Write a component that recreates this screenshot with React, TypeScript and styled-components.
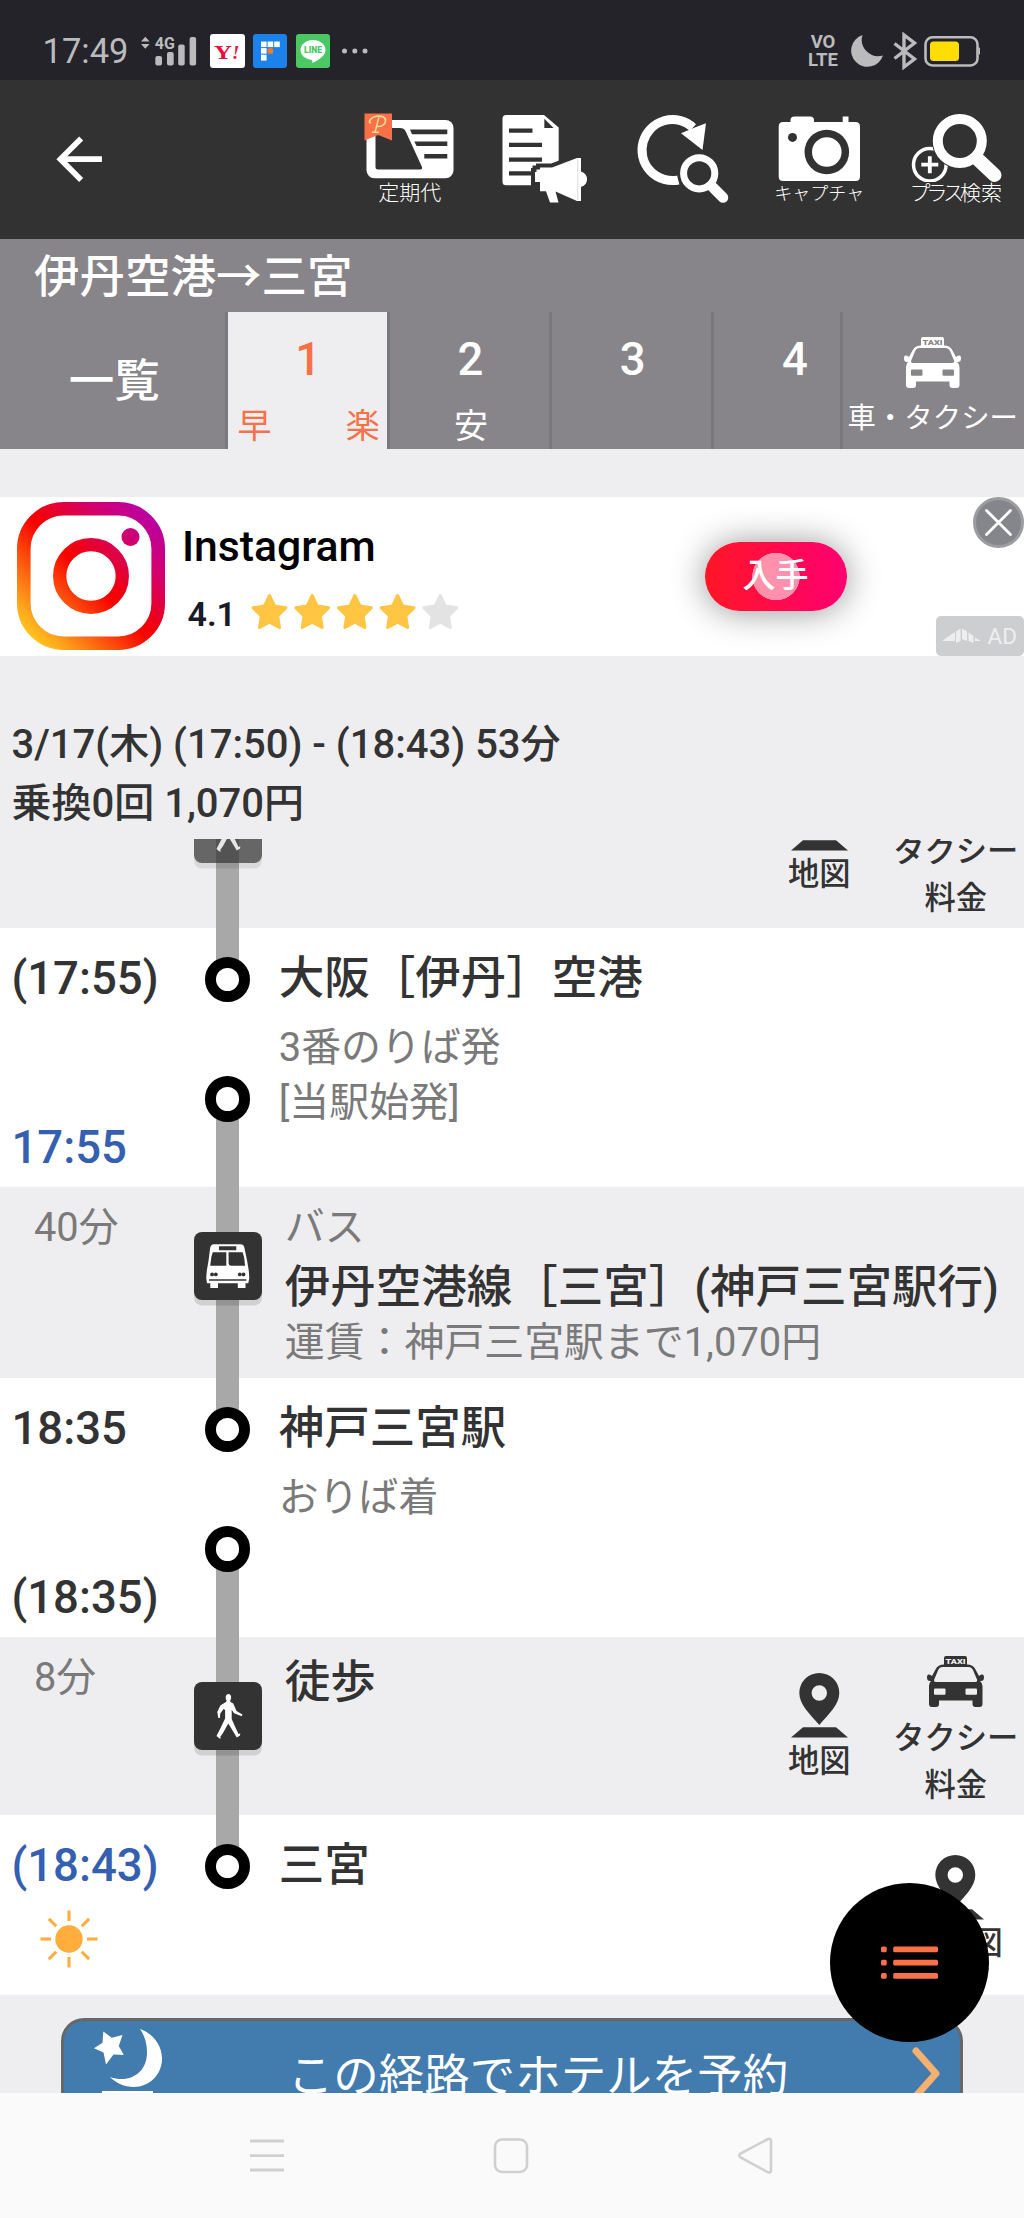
import React from "react";
import styled, { createGlobalStyle, css } from "styled-components";

const color = {
  page: "#eeeef0",
  ink: "#333333",
  sub: "#7a7a7a",
  blue: "#355fb0",
  accent: "#fa7047",
  bar: "#323232",
  header: "#878589",
  divider: "#79787d",
  rail: "#a8a8a8",
};

const Global = createGlobalStyle`
  * { box-sizing: border-box; }
  body { margin: 0; background: ${color.page}; }
  svg { display: block; flex: none; }
`;

const Screen = styled.div`
  width: 1024px;
  height: 2218px;
  position: relative;
  overflow: hidden;
  display: flex;
  flex-direction: column;
  background: ${color.page};
  color: ${color.ink};
  font-family: Roboto, "Noto Sans CJK JP", sans-serif;
  white-space: nowrap;
`;

/* ---------- status bar ---------- */

const StatusBar = styled.header`
  height: 80px;
  flex: none;
  display: flex;
  align-items: center;
  padding: 22px 44px 0 42.5px;
  background: #232329;
  color: #bbbbbd;
`;

const Clock = styled.span`
  width: 98.5px;
  font-size: 34.5px;
  line-height: 40px;
`;

const AppBadge = styled.span<{ $bg: string }>`
  width: 34.5px;
  height: 34.5px;
  margin-right: 8.3px;
  border-radius: 3px;
  background: ${(p) => p.$bg};
  overflow: hidden;
`;

const StatusRight = styled.div`
  margin-left: auto;
  display: flex;
  align-items: center;
`;

const Volte = styled.span`
  width: 32px;
  margin-right: 9px;
  display: flex;
  flex-direction: column;
  align-items: center;
  font-size: 18.5px;
  font-weight: 700;
  line-height: 18px;
`;

/* ---------- toolbar ---------- */

const Toolbar = styled.nav`
  height: 159px;
  flex: none;
  display: flex;
  background: ${color.bar};
  color: #fff;
`;

const BackButton = styled.div`
  padding: 45px 0 0 45px;
  margin-right: auto;
`;

const ToolItem = styled.div`
  width: 136.5px;
  padding-top: 33px;
  display: flex;
  flex-direction: column;
  align-items: center;
`;

const ToolLabel = styled.span<{ $size: number }>`
  font-size: ${(p) => p.$size}px;
  font-weight: 300;
  line-height: 23px;
`;

const Tight = styled.span`
  letter-spacing: -4px;
`;

/* ---------- route header ---------- */

const RouteTitle = styled.h1`
  height: 72.5px;
  flex: none;
  margin: 0;
  padding: 5px 0 0 34px;
  background: ${color.header};
  color: #fff;
  font-size: 45.5px;
  font-weight: 500;
  line-height: 67px;
`;

const Tabs = styled.div`
  height: 137px;
  flex: none;
  display: flex;
  background: ${color.header};
  color: #fff;
`;

const ListTab = styled.div`
  width: 227.5px;
  flex: none;
  border-right: 3px solid ${color.divider};
  text-align: center;
  font-size: 45.5px;
  font-weight: 500;
  line-height: 139px;
  padding-left: 4px;
`;

const TabScroller = styled.div`
  width: 612px;
  flex: none;
  display: flex;
  overflow: hidden;
`;

const Tab = styled.div<{ $active?: boolean }>`
  width: 162.3px;
  flex: none;
  padding: 20px 0 0;
  border-right: 3px solid ${color.divider};
  ${(p) =>
    p.$active &&
    css`
      background: ${color.page};
      color: ${color.accent};
    `}
`;

const TabNumber = styled.div`
  font-size: 45.5px;
  font-weight: 500;
  line-height: 55px;
  text-align: center;
  padding-left: 2px;
`;

const TabMarks = styled.div`
  margin-right: -3px;
  padding-top: 18px;
  display: grid;
  grid-template-columns: repeat(3, 1fr);
  text-align: center;
  font-size: 34px;
  line-height: 42px;
`;

const TaxiTab = styled.div`
  flex: 1;
  border-left: 3px solid ${color.divider};
  padding: 25px 1px 0 0;
  display: flex;
  flex-direction: column;
  align-items: center;
`;

const TaxiTabLabel = styled.span`
  margin-top: 12.5px;
  font-size: 28.4px;
  line-height: 38px;
`;

/* ---------- advertisement ---------- */

const Ad = styled.section`
  position: relative;
  height: 159px;
  flex: none;
  margin-top: 48.5px;
  padding: 5px 0 0 17px;
  display: flex;
  background: #fff;
`;

const AdInfo = styled.div`
  width: 539.5px;
  padding: 22px 0 0 17px;
`;

const AdName = styled.div`
  font-size: 42.7px;
  font-weight: 500;
  line-height: 44px;
  color: #000;
`;

const Rating = styled.div`
  display: flex;
  align-items: center;
  margin-top: 24.5px;
  padding-left: 5.5px;
  height: 39px;
  font-size: 34px;
  font-weight: 600;
  color: #191b29;
`;

const Score = styled.span`
  width: 63px;
  line-height: 39px;
  padding-top: 4px;
`;

const GetButton = styled.div`
  width: 142px;
  height: 69px;
  margin-top: 40px;
  border-radius: 35px;
  background: radial-gradient(circle at 71px 34.5px, rgba(255, 255, 255, 0.55) 23.5px, transparent 24px),
    linear-gradient(90deg, #ff1626, #ff0071);
  box-shadow: 0 1px 34px rgba(0, 0, 0, 0.42);
  color: #fff;
  font-size: 33px;
  font-weight: 500;
  line-height: 67px;
  text-align: center;
`;

const CloseBadge = styled.div`
  position: absolute;
  right: 0;
  top: 0;
  width: 51px;
  height: 51px;
  border-radius: 50%;
  border: 3px solid #9c9da1;
  background: #85868c;
`;

const AdBadge = styled.div`
  position: absolute;
  right: 0;
  bottom: 0;
  width: 88px;
  height: 40px;
  padding: 0 7px 0 6px;
  border-radius: 5px;
  background: #cdced0;
  color: #eeeeef;
  display: flex;
  align-items: center;
  justify-content: space-between;
  font-size: 22.5px;
`;

/* ---------- summary ---------- */

const Summary = styled.section`
  height: 183px;
  flex: none;
  padding: 59px 0 0 11.5px;
  font-size: 40px;
  font-weight: 500;
  line-height: 59px;
`;

/* ---------- route list ---------- */

const RouteList = styled.main`
  height: 1254px;
  flex: none;
  overflow: hidden;
`;

const Row = styled.div<{ $h: number; $leg?: boolean; $scrolled?: number }>`
  height: ${(p) => p.$h}px;
  margin-top: ${(p) => -(p.$scrolled ?? 0)}px;
  display: grid;
  grid-template-columns: 193.5px 68.3px 1fr auto;
  background: ${(p) => (p.$leg ? color.page : "#fff")};
`;

const Times = styled.div`
  padding: 21px 0 9px 11.5px;
  display: flex;
  flex-direction: column;
  justify-content: space-between;
`;

const Time = styled.div<{ $blue?: boolean }>`
  font-size: 45.5px;
  font-weight: 500;
  line-height: 60px;
  color: ${(p) => (p.$blue ? color.blue : color.ink)};
`;

const Duration = styled.div`
  padding: 14px 0 0 34px;
  font-size: 39.8px;
  line-height: 54px;
  color: ${color.sub};
`;

const StationRail = styled.div`
  display: flex;
  flex-direction: column;
  align-items: center;
`;

const Segment = styled.div<{ $h?: number }>`
  width: 23px;
  height: ${(p) => p.$h ?? 0}px;
  flex: ${(p) => (p.$h ? "none" : "1")};
  background: ${color.rail};
  margin: ${(p) => (p.$h ? "0 0 -6px" : "-6px 0 0")};
`;

const Node = styled.div<{ $gap?: number }>`
  position: relative;
  flex: none;
  width: 45.5px;
  height: 45.5px;
  margin-top: ${(p) => p.$gap ?? 0}px;
  border: 11.3px solid #000;
  border-radius: 50%;
  background: #fff;
`;

const LegRail = styled.div`
  padding-top: 45px;
  background: linear-gradient(${color.rail}, ${color.rail}) center / 23px 100% no-repeat;
`;

const ModeBox = styled.div<{ $faded?: boolean }>`
  width: 68.3px;
  height: 68.3px;
  border-radius: 8px;
  background: ${color.ink};
  box-shadow: 0 5.5px 0 rgba(0, 0, 0, 0.12);
  opacity: ${(p) => (p.$faded ? 0.72 : 1)};
`;

const StationBody = styled.div`
  padding: 10px 0 0 17px;
`;

const StationName = styled.div`
  font-size: 45.5px;
  font-weight: 500;
  line-height: 82px;
`;

const Note = styled.div`
  font-size: 39.9px;
  line-height: 55px;
  color: ${color.sub};
`;

const LegBody = styled.div`
  padding: 13px 0 0 23px;
`;

const LineName = styled.div`
  padding-top: 5.5px;
  font-size: 45.5px;
  font-weight: 500;
  line-height: 54.5px;
`;

const Actions = styled.div`
  display: flex;
`;

const Action = styled.div<{ $top: number }>`
  width: 136.5px;
  padding-top: ${(p) => p.$top}px;
  display: flex;
  flex-direction: column;
  align-items: center;
  text-align: center;
  font-size: 31.3px;
  font-weight: 500;
  line-height: 47px;
`;

const ActionText = styled.div<{ $gap: number }>`
  margin-top: ${(p) => p.$gap}px;
`;

const WeatherRow = styled.div`
  padding-left: 28px;
  margin-bottom: 18px;
`;

const HotelButton = styled.div`
  height: 130px;
  margin: 23px 61px 0;
  padding: 8px 18px 0 30px;
  border: 3px solid #676767;
  border-radius: 23px;
  background: #427bad;
  color: #fff;
  display: flex;
  justify-content: space-between;
  font-size: 45.5px;
  line-height: 95px;
`;

const HotelText = styled.span`
  margin-left: 2px;
`;

const ChevronSlot = styled.div`
  padding-top: 17px;
`;

const Fab = styled.div`
  position: absolute;
  left: 830px;
  top: 1882.5px;
  width: 159px;
  height: 159px;
  border-radius: 50%;
  background: #000;
  display: flex;
  align-items: center;
  justify-content: center;
`;

const SystemNav = styled.footer`
  flex: 1;
  position: relative;
  display: flex;
  justify-content: space-between;
  align-items: center;
  padding: 0 251px 0 249px;
  background: #fafafa;
`;

/* ---------- icons ---------- */

const SignalIcon = () => (
  <svg width="69" height="36" viewBox="141 33 69 36" fill="#bbbbbd">
    <path d="M141 41.5l4.3-4.8 4.3 4.8zM141 44h8.6l-4.3 4.8z" />
    <text x="154.8" y="49" fontSize="16" fontWeight="700" fontFamily="Roboto">4G</text>
    <rect x="155.3" y="56" width="6.7" height="9.5" rx="2" />
    <rect x="167" y="52" width="6.7" height="13.5" rx="2" />
    <rect x="178.2" y="44.5" width="6.5" height="21" rx="2" />
    <rect x="189.6" y="37" width="6.5" height="28.5" rx="2" />
  </svg>
);

const YahooBadge = () => (
  <AppBadge $bg="#fff">
    <svg width="34.5" height="34.5" viewBox="0 0 34.5 34.5">
      <text x="4" y="25" fontSize="19" fontWeight="700" fontFamily="Liberation Serif" fill="#f5073c" textLength="18" lengthAdjust="spacingAndGlyphs">Y</text>
      <text x="22" y="25" fontSize="19" fontWeight="700" fontStyle="italic" fontFamily="Liberation Serif" fill="#f5073c">!</text>
    </svg>
  </AppBadge>
);

const BoardBadge = () => (
  <AppBadge $bg="#1a82e8">
    <svg width="34.5" height="34.5" viewBox="0 0 34.5 34.5" fill="#fff">
      <rect x="8" y="7.5" width="5.6" height="5.6" />
      <rect x="14.6" y="7.5" width="5.6" height="5.6" />
      <rect x="21.2" y="7.5" width="5.6" height="5.6" />
      <rect x="8" y="14.1" width="5.6" height="5.6" />
      <rect x="8" y="20.7" width="5.6" height="5.9" />
      <circle cx="17.4" cy="17" r="3" fill="#f47b28" />
    </svg>
  </AppBadge>
);

const LineBadge = () => (
  <AppBadge $bg="#4bc764">
    <svg width="34.5" height="34.5" viewBox="0 0 34.5 34.5">
      <path d="M17 6C10 6 4.5 10.5 4.5 16c0 5 4.3 8.8 10.5 9.7 1.500.3 1.500 1 1.300 3.300C22 26.500 29.500 22 29.500 16 29.500 10.500 24 6 17 6z" fill="#fff" />
      <text x="8" y="19" fontSize="8.6" fontWeight="900" fontFamily="Roboto" fill="#4bc764" textLength="18" lengthAdjust="spacingAndGlyphs">LINE</text>
    </svg>
  </AppBadge>
);

const MoreDots = () => (
  <svg width="30" height="8" viewBox="0 0 30 8" fill="#bbbbbd">
    <circle cx="6.5" cy="4" r="2.5" />
    <circle cx="16.8" cy="4" r="2.5" />
    <circle cx="27" cy="4" r="2.5" />
  </svg>
);

const StatusIcons = () => (
  <svg width="132" height="38" viewBox="848 32 132 38">
    <path d="M862.5 35a16.3 16.3 0 1 0 20.5 20.5A16.5 16.5 0 0 1 862.5 35z" fill="#bbbbbd" />
    <path d="M894.5 43.5l20 15.5-10.500 8V35l10.500 8-20 15.500" fill="none" stroke="#bbbbbd" strokeWidth="3.4" />
    <rect x="925.5" y="37.3" width="52" height="28.2" rx="7" fill="none" stroke="#bbbbbd" strokeWidth="2.6" />
    <path d="M978.5 47q3 1.500 3 4t-3 4z" fill="#bbbbbd" />
    <rect x="930" y="41.5" width="29" height="19.5" rx="3.5" fill="#ffdd00" />
  </svg>
);

const BackIcon = () => (
  <svg width="68.3" height="68.3" viewBox="0 0 24 24" fill="#fff">
    <path d="M20 11H7.83l5.590-5.590L12 4l-8 8 8 8 1.410-1.410L7.830 13H20v-2z" />
  </svg>
);

const PassIcon = () => (
  <svg width="96" height="69" viewBox="0 0 96 69">
    <rect x="4.500" y="7" width="87" height="58.3" rx="8" fill="#fff" />
    <path d="M13.500 18q0-3 3-3H38q4 0 5.500 3L60 54q.6 2.500-2 2.500H16q-2.500 0-2.500-2.500z" fill={color.bar} />
    <path d="M48 16.600h37.300v4.600H50zM52.300 28.400h33v4.600H54.600zM62.300 41h23v4.600h-23z" fill={color.bar} />
    <path d="M2.500.6H30v27l-13.700-5.600L2.500 27.600z" fill={color.accent} />
    <path d="M9 9.500C6 11 7 4.500 15 3.300c6-.9 9 1.700 8.500 5-.5 4.200-5 5.700-8.500 5M17 4.500C15 9 14.500 16 13 18.500m-3 .8h7" fill="none" stroke="#fbdc9a" strokeWidth="1.6" />
  </svg>
);

const hornPath =
  "M37 59h1.500v-2.500H42V54.600h12L79 45h4v13.500q6 2 6 7.800t-6 7.700V88h-4L57.500 78.500 60.500 89.500h-8.500L48 78.300h-6V69H37z";

const NoticeIcon = () => (
  <svg width="96" height="92" viewBox="0 0 96 92">
    <path d="M8 2h38l14.700 12.500V72.300H8q-3.500 0-3.500-3.500V5.500Q4.500 2 8 2z" fill="#fff" />
    <path d="M46.300 5.800V15h9.300z" fill={color.bar} />
    <path d="M11 15.400h23.500v4.300H11zM11 29.800h33v4.300H11zM11 44.500h33v4.300H11zM11 58.300h24v4.300H11z" fill={color.bar} />
    <path d={hornPath} fill={color.bar} stroke={color.bar} strokeWidth="8" />
    <path d={hornPath} fill="#fff" />
    <path d="M79.800 46v41" stroke="#dcdcdc" strokeWidth="1" />
  </svg>
);

const ResearchIcon = () => (
  <svg width="96" height="92" viewBox="0 0 96 92">
    <path d="M43.500 67A30.500 30.500 0 1 1 58 14.500" fill="none" stroke="#fff" strokeWidth="9" />
    <path d="M46 20.300L61 14l10-3.800L67.500 37z" fill="#fff" />
    <circle cx="64.2" cy="60.3" r="22" fill={color.bar} />
    <circle cx="64.2" cy="60.3" r="15.6" fill="none" stroke="#fff" strokeWidth="7" />
    <path d="M76.500 73l11.500 11.500" stroke="#fff" strokeWidth="10.5" strokeLinecap="round" />
  </svg>
);

const CameraIcon = () => (
  <svg width="96" height="69" viewBox="0 0 96 69">
    <path d="M12 9h7.500V7q0-3.500 4-3.500H39q4 0 4 3.500v2h28.700V3.500h5.800V9H84.500q4.500 0 4.500 4.500v50q0 4.500-4.500 4.500H12q-4.300 0-4.300-4.500v-50Q7.700 9 12 9z" fill="#fff" />
    <circle cx="21.5" cy="24.4" r="4.5" fill={color.bar} />
    <circle cx="55.8" cy="39" r="22.3" fill={color.bar} />
    <circle cx="55.8" cy="39" r="14.8" fill="#fff" />
  </svg>
);

const PlusSearchIcon = () => (
  <svg width="96" height="69" viewBox="0 0 96 69">
    <circle cx="21.8" cy="51.7" r="16.3" fill="none" stroke="#fff" strokeWidth="3.5" />
    <path d="M21.800 43.200v17M13.300 51.700h17" stroke="#fff" strokeWidth="3.8" />
    <circle cx="51.8" cy="28" r="28" fill={color.bar} />
    <circle cx="51.8" cy="28" r="22" fill="none" stroke="#fff" strokeWidth="10" />
    <path d="M69 45.500L86.500 62" stroke="#fff" strokeWidth="14" strokeLinecap="round" />
  </svg>
);

const TaxiIcon = ({ fg, bg }: { fg: string; bg: string }) => (
  <svg width="57" height="51" viewBox="0 0 57 51">
    <path
      d="M17 2q0-2 2-2h19q2 0 2 2v6.500q6 0 8.500 5L52 20q5-3.500 5 1.500 0 4-4 3.500 2.500 2 2.500 5V48q0 3-3 3h-4q-3 0-3-3v-3.500H12V48q0 3-3 3H5q-3 0-3-3V30q0-3 2-5-4 .5-4-3.500 0-5 5-1.500l3.500-6.500q2.500-5 8.500-5z"
      fill={fg}
    />
    <path d="M15.500 11h26q3 0 4.500 3l4 9.500q.8 2.500-2 2.500H9q-2.500 0-1.800-2.500l4-9.500q1.300-3 4.300-3z" fill={bg} />
    <rect x="7" y="32.5" width="11.5" height="6.3" rx="1" fill={bg} />
    <rect x="38.5" y="32.5" width="11.5" height="6.3" rx="1" fill={bg} />
    <text x="28.5" y="7.8" fontSize="7.6" fontWeight="900" fontFamily="Roboto" fill={bg} textAnchor="middle" textLength="20" lengthAdjust="spacingAndGlyphs">TAXI</text>
  </svg>
);

const PinIcon = () => (
  <svg width="57" height="64.5" viewBox="0 0 57 64.5" fill={color.ink}>
    <path fillRule="evenodd" d="M28.300 0a20 20 0 0 1 20 20c0 11.500-11 21.500-20 32C19.300 41.500 8.300 31.500 8.300 20a20 20 0 0 1 20-20zm0 12.300a7.700 7.700 0 1 0 0 15.400 7.700 7.700 0 0 0 0-15.400z" />
    <path d="M12 54.300h33l12 10.200H0z" />
  </svg>
);

const WalkIcon = () => (
  <svg width="68.3" height="68.3" viewBox="0 0 68.3 68.3" fill="#fff">
    <ellipse cx="34.4" cy="15.6" rx="2.7" ry="3.6" />
    <path d="M33 18h3l.5 2 2.800 1.500L42.500 29l6 3.600-.8 1.600-7.700-3-2.300-3.400V37l3.300 7.500 3.500 7.500 1.800-.5-.3 2-3.200 2L34.300 41.500 29 51l-2.800 4 .8 1.300-1.500.2-3-2.500 4.800-9.500 3.800-8V28l-1.500-1-3.300 4.500-.5 4.500h-1.500l-1-6 3-6.500 5.700-3.500z" />
  </svg>
);

const BusIcon = () => (
  <svg width="68.3" height="68.3" viewBox="0 0 68.3 68.3">
    <path d="M20 12.300h26.500q3.500 0 4 4l2.500 12 1.800 10.500L55.300 46l-1 5.300h-2.800V56h-7.700v-4.700H24V56h-7.700v-4.700h-3.300L12.200 46l.6-7.200 1.800-10.500 1.500-12q.6-4 3.900-4z" fill="#fff" />
    <path d="M25 14.300h17.300v4H25zM18.800 20.300h13.500v13.400H16.200l1.200-9zM34.600 20.300h14l1.500 5 1 8.400H37q-2.400 0-2.400-2.400z" fill={color.ink} />
    <path d="M15 48h37.300" stroke={color.ink} strokeWidth="1.4" />
    <g fill={color.ink}>
      <circle cx="18.1" cy="42.4" r="1.9" />
      <circle cx="21.8" cy="42.4" r="1.9" />
      <circle cx="45.8" cy="42.4" r="1.9" />
      <circle cx="49.5" cy="42.4" r="1.9" />
    </g>
  </svg>
);

const InstagramLogo = () => (
  <svg width="148" height="148" viewBox="0 0 148 148">
    <defs>
      <linearGradient id="insta" gradientUnits="userSpaceOnUse" x1="12" y1="136" x2="136" y2="12">
        <stop offset="0" stopColor="#ffc91c" />
        <stop offset="0.1" stopColor="#ffa51c" />
        <stop offset="0.48" stopColor="#f80300" />
        <stop offset="0.55" stopColor="#f00010" />
        <stop offset="0.78" stopColor="#d3006c" />
        <stop offset="1" stopColor="#b800a6" />
      </linearGradient>
    </defs>
    <rect x="6.8" y="6.8" width="134.4" height="134.4" rx="40" fill="none" stroke="url(#insta)" strokeWidth="13.6" />
    <circle cx="74" cy="74" r="31.3" fill="none" stroke="url(#insta)" strokeWidth="13.3" />
    <circle cx="113.5" cy="35" r="9" fill="url(#insta)" />
  </svg>
);

const starPath = "M18.500 1.500l5 10.500 11.500 1.800-8.300 8.200 1.800 11.500-10-5.400-10 5.400 1.800-11.500L2 13.800 13.500 12z";

const Stars = () => (
  <svg width="214" height="38" viewBox="0 0 214 38">
    {[0, 1, 2, 3, 4].map((i) => (
      <path
        key={i}
        d={starPath}
        transform={`translate(${i * 42.7} 1)`}
        fill={i < 4 ? "#ffc543" : "#e3e3e3"}
        stroke={i < 4 ? "#ffc543" : "#e3e3e3"}
        strokeWidth="3"
        strokeLinejoin="round"
      />
    ))}
  </svg>
);

const CloseIcon = () => (
  <svg width="45" height="45" viewBox="0 0 45 45">
    <path d="M10.500 10.500l24 24M34.500 10.500l-24 24" stroke="#fff" strokeWidth="2.8" strokeLinecap="round" />
  </svg>
);

const AdMark = () => (
  <svg width="39" height="16" viewBox="0 0 39 16" fill="#eeeeef">
    <path d="M0 13L13 4v9zM14 3.500l4.500-3V13L14 15zM20 .5l5 3V13l-5-2zM26.500 4.500l5 3.500v7l-5-2zM33 9.500l6 3.500h-6z" />
  </svg>
);

const SunIcon = () => (
  <svg width="58" height="58" viewBox="-29 -29 58 58">
    <circle r="13.7" fill="#ffad3d" />
    {[0, 45, 90, 135, 180, 225, 270, 315].map((a) => (
      <path key={a} d="M0-18V-28.500" stroke="#ffad3d" strokeWidth="3.1" transform={`rotate(${a})`} />
    ))}
  </svg>
);

const NightIcon = () => (
  <svg width="68" height="70" viewBox="0 0 68 70" fill="#fff">
    <path d="M9.300 2.500l8.500 6.200L28.500 6l-3.700 11 5 9-10.300-.6-7.500 10-2.500-11.800L0 19.300l8.500-5.500z" />
    <path d="M46 0c12 4 22 15.500 22 29.500C68 46 55 58 40 58c-10 0-18-4-24-10 20 7 37-4.500 37-24.500C53 14 50.500 6.500 46 0z" />
    <rect x="8" y="62" width="51" height="3" />
  </svg>
);

const ChevronIcon = () => (
  <svg width="30" height="56" viewBox="0 0 30 56">
    <path d="M4 5l20 22.500L4 50" fill="none" stroke="#f6b070" strokeWidth="7" strokeLinecap="round" strokeLinejoin="round" />
  </svg>
);

const ListIcon = () => (
  <svg width="57" height="33" viewBox="0 0 57 33" fill={color.accent}>
    {[0.5, 13.7, 27].map((y) => (
      <g key={y}>
        <rect x="0" y={y} width="5.7" height="5.8" rx="1.5" />
        <rect x="12.2" y={y} width="44.8" height="5.8" rx="1.5" />
      </g>
    ))}
  </svg>
);

const RecentsIcon = () => (
  <svg width="36" height="38" viewBox="0 0 36 38">
    <path d="M1 4h34M1 18.700h34M1 33h34" stroke="#d0d0d0" strokeWidth="2.8" />
  </svg>
);

const HomeIcon = () => (
  <svg width="36" height="38" viewBox="0 0 36 38">
    <rect x="2" y="2.5" width="32" height="32.5" rx="7" fill="none" stroke="#d0d0d0" strokeWidth="2.6" />
  </svg>
);

const NavBackIcon = () => (
  <svg width="36" height="38" viewBox="0 0 36 38">
    <path d="M31 2L3.500 16.500q-2.500 2 0 4L31 35.300q3 1 3-2V4q0-3-3-2z" fill="none" stroke="#d0d0d0" strokeWidth="2.6" />
  </svg>
);

/* ---------- composed parts ---------- */

const MapAction = ({ top, label = "地図" }: { top: number; label?: string }) => (
  <Action $top={top}>
    <PinIcon />
    <ActionText $gap={0.5}>{label}</ActionText>
  </Action>
);

const TaxiFareAction = () => (
  <Action $top={19}>
    <TaxiIcon fg={color.ink} bg={color.page} />
    <ActionText $gap={8}>
      タクシー
      <br />
      料金
    </ActionText>
  </Action>
);

const WalkLeg = ({ minutes, title, scrolled }: { minutes?: string; title?: string; scrolled?: number }) => (
  <Row $h={178} $leg $scrolled={scrolled}>
    <Duration>{minutes}</Duration>
    <LegRail>
      <ModeBox $faded={!!scrolled}>
        <WalkIcon />
      </ModeBox>
    </LegRail>
    <LegBody>
      <LineName>{title}</LineName>
    </LegBody>
    <Actions>
      <MapAction top={36} />
      <TaxiFareAction />
    </Actions>
  </Row>
);

type StopProps = { arrive: string; depart: string; departBlue?: boolean; name: string; notes: string[] };

const Stop = ({ arrive, depart, departBlue, name, notes }: StopProps) => (
  <Row $h={259}>
    <Times>
      <Time>{arrive}</Time>
      <Time $blue={departBlue}>{depart}</Time>
    </Times>
    <StationRail>
      <Segment $h={34.5} />
      <Node />
      <Node $gap={74} />
      <Segment />
    </StationRail>
    <StationBody>
      <StationName>{name}</StationName>
      {notes.map((n) => (
        <Note key={n}>{n}</Note>
      ))}
    </StationBody>
  </Row>
);

export default function App() {
  return (
    <>
      <Global />
      <Screen>
        <StatusBar>
          <Clock>17:49</Clock>
          <SignalIcon />
          <YahooBadge />
          <BoardBadge />
          <LineBadge />
          <MoreDots />
          <StatusRight>
            <Volte>
              <span>VO</span>
              <span>LTE</span>
            </Volte>
            <StatusIcons />
          </StatusRight>
        </StatusBar>

        <Toolbar>
          <BackButton>
            <BackIcon />
          </BackButton>
          <ToolItem>
            <PassIcon />
            <ToolLabel $size={21}>定期代</ToolLabel>
          </ToolItem>
          <ToolItem>
            <NoticeIcon />
          </ToolItem>
          <ToolItem>
            <ResearchIcon />
          </ToolItem>
          <ToolItem>
            <CameraIcon />
            <ToolLabel $size={18}>キャプチャ</ToolLabel>
          </ToolItem>
          <ToolItem>
            <PlusSearchIcon />
            <ToolLabel $size={21}>
              <Tight>プラス</Tight>検索
            </ToolLabel>
          </ToolItem>
        </Toolbar>

        <RouteTitle>伊丹空港→三宮</RouteTitle>
        <Tabs>
          <ListTab>一覧</ListTab>
          <TabScroller>
            <Tab $active>
              <TabNumber>1</TabNumber>
              <TabMarks>
                <span>早</span>
                <span />
                <span>楽</span>
              </TabMarks>
            </Tab>
            <Tab>
              <TabNumber>2</TabNumber>
              <TabMarks>
                <span />
                <span>安</span>
                <span />
              </TabMarks>
            </Tab>
            <Tab>
              <TabNumber>3</TabNumber>
            </Tab>
            <Tab>
              <TabNumber>4</TabNumber>
            </Tab>
          </TabScroller>
          <TaxiTab>
            <TaxiIcon fg="#fff" bg={color.header} />
            <TaxiTabLabel>車・タクシー</TaxiTabLabel>
          </TaxiTab>
        </Tabs>

        <Ad>
          <InstagramLogo />
          <AdInfo>
            <AdName>Instagram</AdName>
            <Rating>
              <Score>4.1</Score>
              <Stars />
            </Rating>
          </AdInfo>
          <GetButton>入手</GetButton>
          <CloseBadge>
            <CloseIcon />
          </CloseBadge>
          <AdBadge>
            <AdMark />
            AD
          </AdBadge>
        </Ad>

        <Summary>
          3/17(木) (17:50) - (18:43) 53分
          <br />
          乗換0回 1,070円
        </Summary>

        <RouteList>
          <WalkLeg scrolled={89} />
          <Stop arrive="(17:55)" depart="17:55" departBlue name="大阪［伊丹］空港" notes={["3番のりば発", "[当駅始発]"]} />
          <Row $h={191} $leg>
            <Duration>40分</Duration>
            <LegRail>
              <ModeBox>
                <BusIcon />
              </ModeBox>
            </LegRail>
            <LegBody>
              <Note>バス</Note>
              <LineName>伊丹空港線［三宮］(神戸三宮駅行)</LineName>
              <Note>運賃：神戸三宮駅まで1,070円</Note>
            </LegBody>
          </Row>
          <Stop arrive="18:35" depart="(18:35)" name="神戸三宮駅" notes={["おりば着"]} />
          <WalkLeg minutes="8分" title="徒歩" />
          <Row $h={180}>
            <Times>
              <Time $blue>(18:43)</Time>
              <WeatherRow>
                <SunIcon />
              </WeatherRow>
            </Times>
            <StationRail>
              <Segment $h={34.5} />
              <Node />
            </StationRail>
            <StationBody>
              <StationName>三宮</StationName>
            </StationBody>
            <Actions>
              <MapAction top={40} label="周辺図" />
            </Actions>
          </Row>
          <HotelButton>
            <NightIcon />
            <HotelText>この経路でホテルを予約</HotelText>
            <ChevronSlot>
              <ChevronIcon />
            </ChevronSlot>
          </HotelButton>
        </RouteList>

        <SystemNav>
          <RecentsIcon />
          <HomeIcon />
          <NavBackIcon />
        </SystemNav>
        <Fab>
          <ListIcon />
        </Fab>
      </Screen>
    </>
  );
}
